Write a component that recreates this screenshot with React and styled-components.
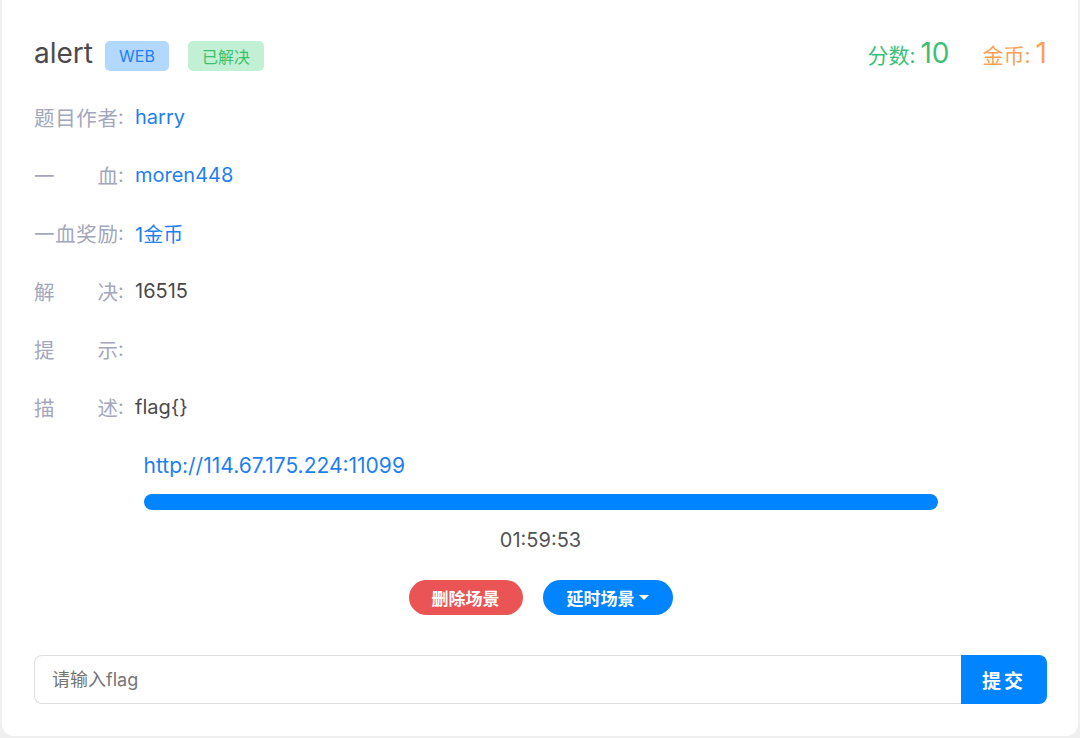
import React from 'react'
import styled, { createGlobalStyle } from 'styled-components'

const Global = createGlobalStyle`
  html, body { margin: 0; padding: 0; background: #efefef; }
  body { font-family: Inter, "Noto Sans CJK SC", sans-serif; }
  * { box-sizing: border-box; }
`

const Card = styled.div`
  margin: 0 2px;
  height: 736px;
  background: #fff;
  border-radius: 0 0 12px 12px;
  padding: 34px 31px 0 32px;
`

const Header = styled.div`
  display: flex;
  align-items: center;
  justify-content: space-between;
  height: 38px;
`

const TitleGroup = styled.div`
  display: flex;
  align-items: center;
`

const Title = styled.h2`
  margin: 0 12px 0 0;
  font-size: 28px;
  font-weight: 400;
  color: #4a4a4a;
`

const Badge = styled.span`
  display: inline-flex;
  align-items: center;
  justify-content: center;
  height: 30px;
  width: ${(p) => p.$w}px;
  margin: 6px 19px 0 0;
  border-radius: 5px;
  font-size: 16px;
  background: ${(p) => p.$bg};
  color: ${(p) => p.$fg};
`

const Stats = styled.div`
  display: flex;
  align-items: baseline;
  gap: 33px;
`

const Stat = styled.span`
  color: ${(p) => p.$color};
  font-size: 21px;
  & b {
    font-weight: 400;
    font-size: 28px;
    margin-left: 5px;
  }
`

const InfoList = styled.div`
  margin-top: 16px;
  display: flex;
  flex-direction: column;
`

const Row = styled.div`
  display: flex;
  align-items: center;
  height: 58px;
  font-size: 20px;
`

const Label = styled.span`
  display: flex;
  width: 84px;
  justify-content: space-between;
  color: #a3a7bd;
  font-size: 20.5px;
`

const Colon = styled.span`
  color: #a3a7bd;
  width: 17px;
`

const Value = styled.span`
  color: ${(p) => (p.$link ? '#1f7ff0' : '#4a4a4a')};
`

const Scene = styled.div`
  width: 794px;
  margin: 0 auto;
  padding-top: 16px;
  display: flex;
  flex-direction: column;
`

const Url = styled.a`
  color: #1f7ff0;
  text-decoration: none;
  font-size: 21px;
  line-height: 28px;
`

const Bar = styled.div`
  height: 16px;
  margin-top: 14px;
  border-radius: 8px;
  background: #0084ff;
`

const Time = styled.div`
  text-align: center;
  margin-top: 17px;
  font-size: 20px;
  color: #555;
  line-height: 26px;
`

const Actions = styled.div`
  display: flex;
  justify-content: center;
  gap: 20px;
  margin-top: 27px;
`

const PillButton = styled.button`
  height: 35px;
  width: ${(p) => p.$w}px;
  border: none;
  border-radius: 18px;
  background: ${(p) => p.$bg};
  color: #fff;
  font-family: "Noto Sans CJK SC", sans-serif;
  font-weight: 700;
  font-size: 17px;
  display: inline-flex;
  align-items: center;
  justify-content: center;
  gap: 4px;
`

const Caret = styled.span`
  width: 0;
  height: 0;
  border-left: 5px solid transparent;
  border-right: 5px solid transparent;
  border-top: 5px solid #fff;
`

const FlagForm = styled.form`
  display: flex;
  margin-top: 40px;
  height: 49px;
`

const FlagInput = styled.input`
  flex: 1;
  border: 1px solid #dedede;
  border-right: none;
  border-radius: 8px 0 0 8px;
  padding: 0 17px;
  font-size: 18px;
  font-family: Inter, "Noto Sans CJK SC", sans-serif;
  outline: none;
  &::placeholder { color: #757575; }
`

const Submit = styled.button`
  width: 86px;
  border: none;
  border-radius: 0 8px 8px 0;
  background: #0084ff;
  color: #fff;
  font-family: "Noto Sans CJK SC", sans-serif;
  font-weight: 700;
  font-size: 19px;
  letter-spacing: 3px;
`

const info = [
  { label: ['题', '目', '作', '者'], value: 'harry', link: true },
  { label: ['一', '血'], value: 'moren448', link: true },
  { label: ['一', '血', '奖', '励'], value: '1金币', link: true },
  { label: ['解', '决'], value: '16515' },
  { label: ['提', '示'], value: '' },
  { label: ['描', '述'], value: 'flag{}' },
]

export default function App() {
  return (
    <>
      <Global />
      <Card>
        <Header>
          <TitleGroup>
            <Title>alert</Title>
            <Badge $bg="#b3d8ff" $fg="#1e7ef5" $w={64}>WEB</Badge>
            <Badge $bg="#c2f0d4" $fg="#3dc06c" $w={76}>已解决</Badge>
          </TitleGroup>
          <Stats>
            <Stat $color="#3cbf78">分数:<b>10</b></Stat>
            <Stat $color="#fba157">金币:<b>1</b></Stat>
          </Stats>
        </Header>
        <InfoList>
          {info.map((r, i) => (
            <Row key={i}>
              <Label>{r.label.map((c, j) => <span key={j}>{c}</span>)}</Label>
              <Colon>:</Colon>
              <Value $link={r.link}>{r.value}</Value>
            </Row>
          ))}
        </InfoList>
        <Scene>
          <Url href="#">http://114.67.175.224:11099</Url>
          <Bar />
          <Time>01:59:53</Time>
          <Actions>
            <PillButton $bg="#ea5455" $w={114}>删除场景</PillButton>
            <PillButton $bg="#0084ff" $w={130}>延时场景<Caret /></PillButton>
          </Actions>
        </Scene>
        <FlagForm onSubmit={(e) => e.preventDefault()}>
          <FlagInput placeholder="请输入flag" />
          <Submit type="submit">提交</Submit>
        </FlagForm>
      </Card>
    </>
  )
}
